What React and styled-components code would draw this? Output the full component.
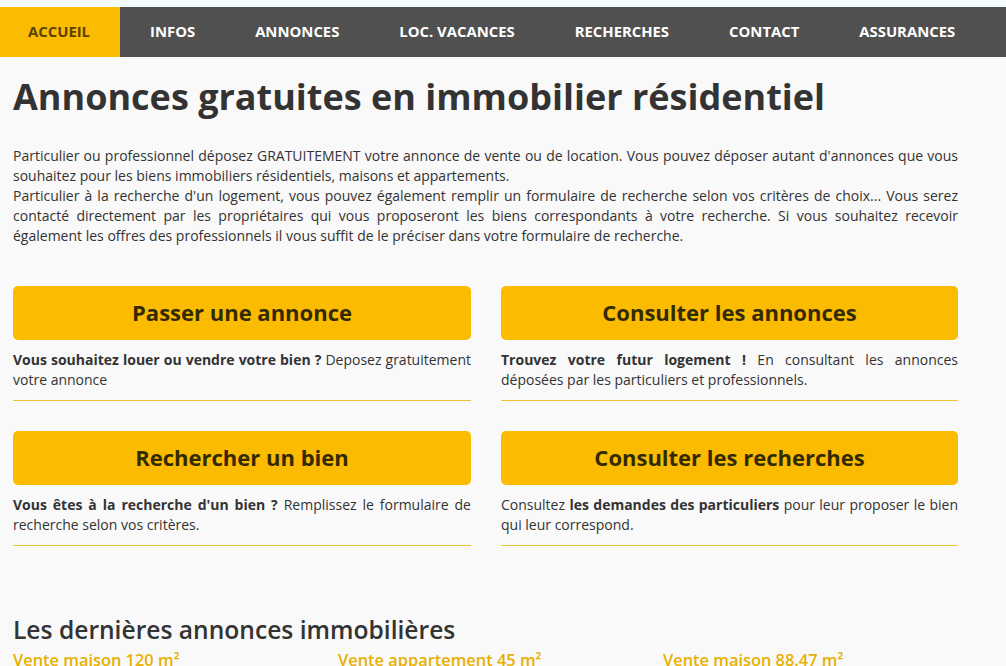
import React from 'react';
import styled, { createGlobalStyle } from 'styled-components';

const GlobalStyle = createGlobalStyle`
  html, body {
    margin: 0;
    padding: 0;
    background: #f9f9f9;
    font-family: 'Open Sans', 'Liberation Sans', sans-serif;
    color: #333333;
  }
  body { border-top: 7px solid #f2fcff; overflow: hidden; }
`;

const Nav = styled.nav`
  display: flex;
  height: 50px;
  background: #505050;
`;

const NavItem = styled.a`
  display: flex;
  align-items: center;
  padding: 0 30px 2px ${(p) => (p.$first ? '28px' : '30px')};
  font-size: 14.85px;
  font-weight: 700;
  text-transform: uppercase;
  text-decoration: none;
  cursor: pointer;
  color: ${(p) => (p.$active ? '#5a4300' : '#ffffff')};
  background: ${(p) => (p.$active ? '#fbbb00' : 'transparent')};
  &:hover { color: #fbbb00; }
`;

const Main = styled.main`
  width: 945px;
  margin-left: 13px;
`;

const Title = styled.h1`
  margin: 17px 0 26px;
  font-size: 36px;
  line-height: 46px;
  font-weight: 700;
  color: #333333;
`;

const Intro = styled.p`
  margin: 0;
  font-size: 14px;
  line-height: 20px;
  text-align: justify;
`;

const Cards = styled.div`
  display: grid;
  grid-template-columns: 458px 457px;
  column-gap: 30px;
  row-gap: 30px;
  margin-top: 40px;
`;

const Card = styled.div`
  border-bottom: 1px solid #f0c330;
  padding-bottom: 10px;
`;

const CardButton = styled.a`
  display: flex;
  align-items: center;
  justify-content: center;
  height: 54px;
  padding-bottom: 3px;
  box-sizing: border-box;
  border-radius: 5px;
  background: #fbbb00;
  color: #332a00;
  font-size: 22px;
  font-weight: 700;
  text-decoration: none;
  cursor: pointer;
`;

const CardText = styled.p`
  margin: 10px 0 0;
  font-size: 14px;
  line-height: 20px;
  text-align: justify;
  b { font-weight: 700; }
`;

const Section = styled.h2`
  margin: 68px 0 4px;
  font-size: 24.6px;
  line-height: 31px;
  font-weight: 600;
  color: #333333;
`;

const Listings = styled.div`
  display: grid;
  grid-template-columns: repeat(3, 325px);
`;

const ListingTitle = styled.a`
  font-size: 16.4px;
  line-height: 22px;
  font-weight: 600;
  color: #e8b000;
  text-decoration: none;
`;

const navItems = ['Accueil', 'Infos', 'Annonces', 'Loc. vacances', 'Recherches', 'Contact', 'Assurances'];

const cards = [
  {
    label: 'Passer une annonce',
    text: (
      <>
        <b>Vous souhaitez louer ou vendre votre bien ?</b> Deposez gratuitement votre annonce
      </>
    ),
  },
  {
    label: 'Consulter les annonces',
    text: (
      <>
        <b>Trouvez votre futur logement !</b> En consultant les annonces déposées par les particuliers et professionnels.
      </>
    ),
  },
  {
    label: 'Rechercher un bien',
    text: (
      <>
        <b>Vous êtes à la recherche d'un bien ?</b> Remplissez le formulaire de recherche selon vos critères.
      </>
    ),
  },
  {
    label: 'Consulter les recherches',
    text: (
      <>
        Consultez <b>les demandes des particuliers</b> pour leur proposer le bien qui leur correspond.
      </>
    ),
  },
];

const listings = ['Vente maison 120 m²', 'Vente appartement 45 m²', 'Vente maison 88.47 m²'];

export default function App() {
  return (
    <>
      <GlobalStyle />
      <Nav>
        {navItems.map((item, i) => (
          <NavItem key={item} $active={i === 0} $first={i === 0}>
            {item}
          </NavItem>
        ))}
      </Nav>
      <Main>
        <Title>Annonces gratuites en immobilier résidentiel</Title>
        <Intro>
          Particulier ou professionnel déposez GRATUITEMENT votre annonce de vente ou de location. Vous pouvez déposer
          autant d'annonces que vous souhaitez pour les biens immobiliers résidentiels, maisons et appartements.
        </Intro>
        <Intro>
          Particulier à la recherche d'un logement, vous pouvez également remplir un formulaire de recherche selon vos
          critères de choix... Vous serez contacté directement par les propriétaires qui vous proposeront les biens
          correspondants à votre recherche. Si vous souhaitez recevoir également les offres des professionnels il vous
          suffit de le préciser dans votre formulaire de recherche.
        </Intro>
        <Cards>
          {cards.map((c) => (
            <Card key={c.label}>
              <CardButton>{c.label}</CardButton>
              <CardText>{c.text}</CardText>
            </Card>
          ))}
        </Cards>
        <Section>Les dernières annonces immobilières</Section>
        <Listings>
          {listings.map((l) => (
            <ListingTitle key={l}>{l}</ListingTitle>
          ))}
        </Listings>
      </Main>
    </>
  );
}
